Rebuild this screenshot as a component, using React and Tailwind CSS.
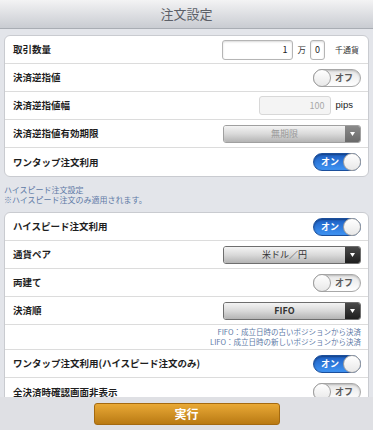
import React from "react";

const font = { fontFamily: '"Noto Sans CJK JP", "Liberation Sans", sans-serif' };

function Toggle({ on }) {
  if (on) {
    return (
      <div className="relative w-[48px] h-[18px] rounded-full border border-[#1b4f9c] bg-gradient-to-b from-[#1d5fc4] to-[#3f93f2] shadow-[inset_0_1px_2px_rgba(0,0,0,0.35)]">
        <span className="absolute left-[7px] top-0 h-full flex items-center text-white text-[9px] font-bold">
          オン
        </span>
        <div className="absolute right-[-1px] top-[-1px] w-[18px] h-[18px] rounded-full border border-[#a0a0a0] bg-gradient-to-b from-[#ffffff] to-[#e8e8e8]" />
      </div>
    );
  }
  return (
    <div className="relative w-[48px] h-[18px] rounded-full border border-[#a8a8a8] bg-gradient-to-b from-[#e6e6e6] to-[#ffffff] shadow-[inset_0_1px_2px_rgba(0,0,0,0.2)]">
      <span className="absolute right-[7px] top-0 h-full flex items-center text-[#5a5a5a] text-[9px] font-bold">
        オフ
      </span>
      <div className="absolute left-[-1px] top-[-1px] w-[18px] h-[18px] rounded-full border border-[#a0a0a0] bg-gradient-to-b from-[#ffffff] to-[#e8e8e8]" />
    </div>
  );
}

function Select({ value, disabled, bold }) {
  return (
    <div
      className={`flex w-[138px] h-[18px] rounded-[3px] border overflow-hidden ${
        disabled ? "border-[#a0a0a0]" : "border-[#6e6e6e]"
      }`}
    >
      <div
        className={`flex-1 flex items-center justify-center text-[9px] bg-gradient-to-b from-[#f4f4f4] via-[#d9d9d9] to-[#b4b4b4] ${
          disabled ? "text-[#9a9a9a]" : "text-[#333]"
        } ${bold ? "font-bold" : ""}`}
      >
        {value}
      </div>
      <div
        className={`w-[15px] flex items-center justify-center ${
          disabled
            ? "bg-gradient-to-b from-[#8a8a8a] to-[#6a6a6a]"
            : "bg-gradient-to-b from-[#4a4a4a] to-[#1e1e1e]"
        }`}
      >
        <svg width="5" height="4" viewBox="0 0 5 4">
          <path d="M0 0 L5 0 L2.5 4 Z" fill="#fff" />
        </svg>
      </div>
    </div>
  );
}

function Row({ label, children, last }) {
  return (
    <div
      className={`h-[28px] flex items-center justify-between pl-[8px] pr-[7px] ${
        last ? "" : "border-b border-[#dcdcdc]"
      }`}
    >
      <span className="text-[9.5px] font-bold text-[#1e1e1e] whitespace-nowrap">{label}</span>
      <div className="flex items-center">{children}</div>
    </div>
  );
}

export default function App() {
  return (
    <div className="w-[373px] h-[430px] flex flex-col overflow-hidden bg-[#e3e5ea]" style={font}>
      {/* HEADER */}
      <div className="h-[29px] shrink-0 flex items-center justify-center bg-gradient-to-b from-[#f3f3f4] to-[#c9ccd2] border-b border-[#a9adb4]">
        <span className="text-[13px] text-[#5c6068]">注文設定</span>
      </div>

      {/* CONTENT */}
      <div className="flex-1 overflow-hidden px-[4px] pt-[6px]">
        <div className="bg-white rounded-[6px] border border-[#c9cbd0]">
          <Row label="取引数量">
            <div className="w-[71px] h-[20px] rounded-[3px] border border-[#b5b5b5] bg-white shadow-[inset_0_1px_2px_rgba(0,0,0,0.15)] flex items-center justify-end pr-[5px] text-[9px] text-[#222]">
              1
            </div>
            <span className="text-[8.5px] text-[#333] mx-[4px]">万</span>
            <div className="w-[15px] h-[20px] rounded-[3px] border border-[#b5b5b5] bg-white shadow-[inset_0_1px_2px_rgba(0,0,0,0.15)] flex items-center justify-center text-[9px] text-[#222]">
              0
            </div>
            <span className="text-[8px] text-[#333] ml-[10px] mr-[2px]">千通貨</span>
          </Row>
          <Row label="決済逆指値">
            <Toggle on={false} />
          </Row>
          <Row label="決済逆指値幅">
            <div className="w-[72px] h-[19px] rounded-[3px] border border-[#d8d8d8] bg-[#f4f4f4] flex items-center justify-end pr-[5px] text-[9px] text-[#a8a8a8]">
              100
            </div>
            <span className="text-[9.5px] text-[#222] ml-[5px] mr-[8px]" style={{ fontFamily: '"Liberation Sans", sans-serif' }}>
              pips
            </span>
          </Row>
          <Row label="決済逆指値有効期限">
            <Select value="無期限" disabled />
          </Row>
          <Row label="ワンタップ注文利用" last>
            <Toggle on />
          </Row>
        </div>

        <div className="mt-[8px] mb-[8px] text-[8px] leading-[9.5px] text-[#5e7aa6]">
          <div className="h-[9.5px]">ハイスピード注文設定</div>
          <div className="h-[9.5px]">※ハイスピード注文のみ適用されます。</div>
        </div>

        <div className="bg-white rounded-[6px] border border-[#c9cbd0]">
          <Row label="ハイスピード注文利用">
            <Toggle on />
          </Row>
          <Row label="通貨ペア">
            <Select value="米ドル／円" />
          </Row>
          <Row label="両建て">
            <Toggle on={false} />
          </Row>
          <Row label="決済順">
            <Select value="FIFO" bold />
          </Row>
          <div className="h-[25px] flex flex-col items-end justify-center pr-[7px] border-b border-[#dcdcdc] text-[7.5px] leading-[10px] text-[#5e7aa6]">
            <div>FIFO：成立日時の古いポジションから決済</div>
            <div>LIFO：成立日時の新しいポジションから決済</div>
          </div>
          <Row label="ワンタップ注文利用(ハイスピード注文のみ)">
            <Toggle on />
          </Row>
          <Row label="全決済時確認画面非表示" last>
            <Toggle on={false} />
          </Row>
        </div>
      </div>

      {/* FOOTER */}
      <div className="h-[33px] shrink-0 flex items-center justify-center bg-[#dfe0e4]">
        <button className="w-[186px] h-[22px] rounded-[3px] border border-[#a46a10] bg-gradient-to-b from-[#e9a935] to-[#b97a12] text-white text-[12px] font-bold">
          実行
        </button>
      </div>
    </div>
  );
}
